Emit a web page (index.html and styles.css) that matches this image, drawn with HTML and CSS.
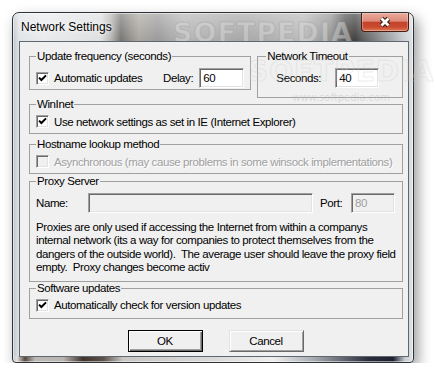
FILE: index.html
```html
<!DOCTYPE html>
<html lang="en">
  <head>
    <meta charset="utf-8" />
    <meta name="viewport" content="width=device-width, initial-scale=1.0" />
    <title>Network Settings</title>
    <link rel="stylesheet" href="styles.css">
  </head>
  <body>
    <div class="window">
      <div class="titlebar">
        <span class="title">Network Settings</span>
        <span class="title-mark">SOFTPEDIA</span>
        <button class="close-btn" type="button">
          <svg width="16" height="12" viewBox="0 0 16 12">
            <path class="x-edge" d="M4.5 2.5 L11.5 9.5 M11.5 2.5 L4.5 9.5" />
            <path class="x-face" d="M4.5 2.5 L11.5 9.5 M11.5 2.5 L4.5 9.5" />
          </svg>
        </button>
      </div>

      <div class="client">
        <div class="client-mark">
          <span class="mark-big">SOFTPEDIA</span>
          <span class="mark-url">www.softpedia.com</span>
        </div>

        <div class="top-row">
          <fieldset class="group group-update">
            <legend>Update frequency (seconds)</legend>
            <div class="field-row">
              <label class="check check-auto">
                <span class="box"><svg width="9" height="9" viewBox="0 0 9 9"><path d="M1 3.6 L3.4 6 L8 1.4" /></svg></span>
                Automatic updates
              </label>
              <span class="label-delay">Delay:</span>
              <span class="textbox textbox-delay">60</span>
            </div>
          </fieldset>
          <fieldset class="group group-timeout">
            <legend>Network Timeout</legend>
            <div class="field-row">
              <span class="label-seconds">Seconds:</span>
              <span class="textbox textbox-seconds">40</span>
            </div>
          </fieldset>
        </div>

        <fieldset class="group group-wininet">
          <legend>WinInet</legend>
          <label class="check">
            <span class="box"><svg width="9" height="9" viewBox="0 0 9 9"><path d="M1 3.6 L3.4 6 L8 1.4" /></svg></span>
            Use network settings as set in IE (Internet Explorer)
          </label>
        </fieldset>

        <fieldset class="group group-hostname">
          <legend>Hostname lookup method</legend>
          <label class="check check-disabled">
            <span class="box"></span>
            Asynchronous (may cause problems in some winsock implementations)
          </label>
        </fieldset>

        <fieldset class="group group-proxy">
          <legend>Proxy Server</legend>
          <div class="field-row">
            <span class="label-name">Name:</span>
            <span class="textbox textbox-disabled textbox-name"></span>
            <span class="label-port">Port:</span>
            <span class="textbox textbox-disabled textbox-port">80</span>
          </div>
          <p class="proxy-note">
            Proxies are only used if accessing the Internet from within a companys<br>
            internal network (its a way for companies to protect themselves from the<br>
            dangers of the outside world).&nbsp; The average user should leave the proxy field<br>
            empty.&nbsp; Proxy changes become activ
          </p>
        </fieldset>

        <fieldset class="group group-software">
          <legend>Software updates</legend>
          <label class="check">
            <span class="box"><svg width="9" height="9" viewBox="0 0 9 9"><path d="M1 3.6 L3.4 6 L8 1.4" /></svg></span>
            Automatically check for version updates
          </label>
        </fieldset>

        <div class="buttons">
          <button class="btn btn-default" type="button">OK</button>
          <button class="btn" type="button">Cancel</button>
        </div>
      </div>
    </div>
  </body>
</html>
```

FILE: styles.css
```css
body {
  margin: 0;
  background-color: white;
  font-family: "Liberation Sans", Arial, sans-serif;
  font-size: 11.5px;
  letter-spacing: -0.4px;
  color: #000;
}

/* window frame */
.window {
  box-sizing: border-box;
  width: 402px;
  height: 351px;
  margin: 12px 0 0 12px;
  padding: 0 4px 5px 6px;
  border: 1px solid #2f3338;
  border-radius: 7px 7px 4px 4px;
  display: flex;
  flex-direction: column;
  background:
    linear-gradient(to bottom, rgba(255, 255, 255, 0.35), rgba(255, 255, 255, 0) 30px),
    linear-gradient(to right, #c4c7ca 0, #e0e1e2 4px, #57493f 12px, #bcb8b4 22px, #b9b6b2 50px,
      #3f332c 70px, #5c5048 90px, #c9c7c5 110px, #d9d9d9 200px, #eeeeee 260px, #a9acb2 300px,
      #2a2e3c 355px, #1c2030 380px, #c8ccd0 392px, #e2e4e6 400px) bottom / 100% 6px no-repeat,
    linear-gradient(to right, #bfc5ca 0, #dfe3e6 6px, #e8eaec 30px, #dcdedf 88px, #b5b4b1 98px,
      #737270 108px, #8c8a86 116px, #a7a39d 126px, #979797 145px, #b3b3b3 170px, #a4a4a4 230px,
      #b8b8b8 290px, #8f8f8f 318px, #4d4d4d 332px, #3a3a3a 342px, #5a5a5a 350px, #cfd3d6 393px,
      #dfe2e5 400px);
  box-shadow: 4px 6px 14px rgba(0, 0, 0, 0.4), inset 0 0 0 1px rgba(255, 255, 255, 0.5);
}

.titlebar {
  position: relative;
  height: 28px;
  display: flex;
  align-items: flex-start;
  overflow: hidden;
}
.title {
  align-self: center;
  padding-left: 2px;
  font-size: 12px;
  letter-spacing: 0;
  text-shadow: 0 0 6px rgba(255, 255, 255, 0.9), 0 0 3px rgba(255, 255, 255, 0.8);
}
.title-mark {
  position: absolute;
  left: 154px;
  top: 6px;
  font-family: "DejaVu Sans", sans-serif;
  font-weight: bold;
  font-size: 27px;
  letter-spacing: 1px;
  line-height: 1;
  color: rgba(215, 215, 215, 0.5);
  -webkit-text-stroke: 1px rgba(140, 140, 140, 0.3);
}
.close-btn {
  position: relative;
  margin-left: auto;
  width: 48px;
  height: 19px;
  padding: 0;
  border: 1px solid #4a1c14;
  border-top: none;
  border-radius: 0 0 4px 4px;
  display: flex;
  align-items: center;
  justify-content: center;
  background: linear-gradient(to bottom, #e9aa9c 0%, #de8b79 45%, #c4432c 52%, #c94a30 78%, #e07c56 100%);
  box-shadow: inset 0 0 0 1px rgba(255, 255, 255, 0.3);
}
.x-edge {
  fill: none;
  stroke: #3a1810;
  stroke-width: 4.8;
}
.x-face {
  fill: none;
  stroke: #fff;
  stroke-width: 2.8;
}

/* client area */
.client {
  position: relative;
  box-sizing: border-box;
  height: 316px;
  padding: 8px 5px 0 9px;
  border: 1px solid #5f6770;
  background-color: #f0f0f0;
}
.client-mark {
  position: absolute;
  left: 228px;
  top: 16px;
  display: flex;
  flex-direction: column;
  align-items: center;
  pointer-events: none;
}
.mark-big {
  font-family: "DejaVu Sans", sans-serif;
  font-weight: bold;
  font-size: 28px;
  line-height: 1;
  letter-spacing: 1px;
  color: transparent;
  -webkit-text-stroke: 1px rgba(205, 205, 205, 0.35);
}
.mark-url {
  margin-top: 6px;
  font-family: "DejaVu Sans", sans-serif;
  font-size: 10px;
  letter-spacing: 0;
  color: rgba(185, 185, 185, 0.4);
}

.group {
  margin: 0;
  min-width: 0;
  border: 1px solid #a0a0a0;
}
.group legend {
  padding: 0 1px;
  line-height: 13px;
}
.top-row {
  display: flex;
  align-items: flex-start;
  gap: 6px;
}
.group-update {
  width: 223px;
  box-sizing: border-box;
  padding: 5px 6px 1px 6px;
}
.group-timeout {
  width: 146px;
  box-sizing: border-box;
  padding: 5px 6px 9px 18px;
}
.group-timeout legend {
  margin-left: -10px;
}
.group-wininet,
.group-hostname,
.group-software {
  padding: 3px 6px 4px 6px;
}
.group-hostname {
  margin-top: 4px;
}
.group-proxy {
  margin-top: 1px;
  padding: 5px 6px 6px 6px;
}
.group-software {
  padding-bottom: 5px;
}

.field-row {
  display: flex;
  align-items: center;
  height: 20px;
}

.check {
  display: flex;
  align-items: center;
  gap: 5px;
  height: 15px;
  white-space: nowrap;
}
.check-auto {
  width: 127px;
  flex: none;
}
.check-disabled {
  color: #a0a0a0;
  text-shadow: 1px 1px 0 #fff;
}
.box {
  box-sizing: border-box;
  width: 13px;
  height: 13px;
  flex: none;
  display: flex;
  align-items: center;
  justify-content: center;
  background-color: #fff;
  border: 1px solid;
  border-color: #a0a0a0 #fff #fff #a0a0a0;
  box-shadow: inset 1px 1px 0 #696969, inset -1px -1px 0 #e3e3e3;
}
.box path {
  fill: none;
  stroke: #000;
  stroke-width: 2;
}
.check-disabled .box {
  background-color: #f0f0f0;
}

.label-delay {
  width: 37px;
}
.label-seconds {
  width: 59px;
}
.label-name {
  width: 52px;
}
.label-port {
  width: 31px;
  margin-left: 7px;
}

.textbox {
  box-sizing: border-box;
  height: 20px;
  padding: 0 3px;
  line-height: 18px;
  background-color: #fff;
  border: 1px solid;
  border-color: #a0a0a0 #fff #fff #a0a0a0;
  box-shadow: inset 1px 1px 0 #696969, inset -1px -1px 0 #e3e3e3;
}
.textbox-delay {
  width: 46px;
}
.textbox-seconds {
  width: 44px;
}
.textbox-name {
  width: 225px;
}
.textbox-port {
  width: 44px;
}
.textbox-disabled {
  background-color: #f0f0f0;
  color: #a0a0a0;
}

.proxy-note {
  margin: 8px 0 0 0;
  line-height: 13.4px;
  white-space: nowrap;
}

.buttons {
  display: flex;
  justify-content: center;
  gap: 26px;
  margin-top: 11px;
  padding-right: 1px;
}
.btn {
  box-sizing: border-box;
  width: 75px;
  height: 22px;
  padding: 0;
  font: inherit;
  letter-spacing: inherit;
  color: #000;
  background-color: #f0f0f0;
  border: 1px solid;
  border-color: #e3e3e3 #696969 #696969 #e3e3e3;
  box-shadow: inset 1px 1px 0 #fff, inset -1px -1px 0 #a0a0a0;
}
.btn-default {
  border-color: #000;
  box-shadow: inset 1px 1px 0 #fff, inset -1px -1px 0 #696969, inset -2px -2px 0 #a0a0a0;
}
```
